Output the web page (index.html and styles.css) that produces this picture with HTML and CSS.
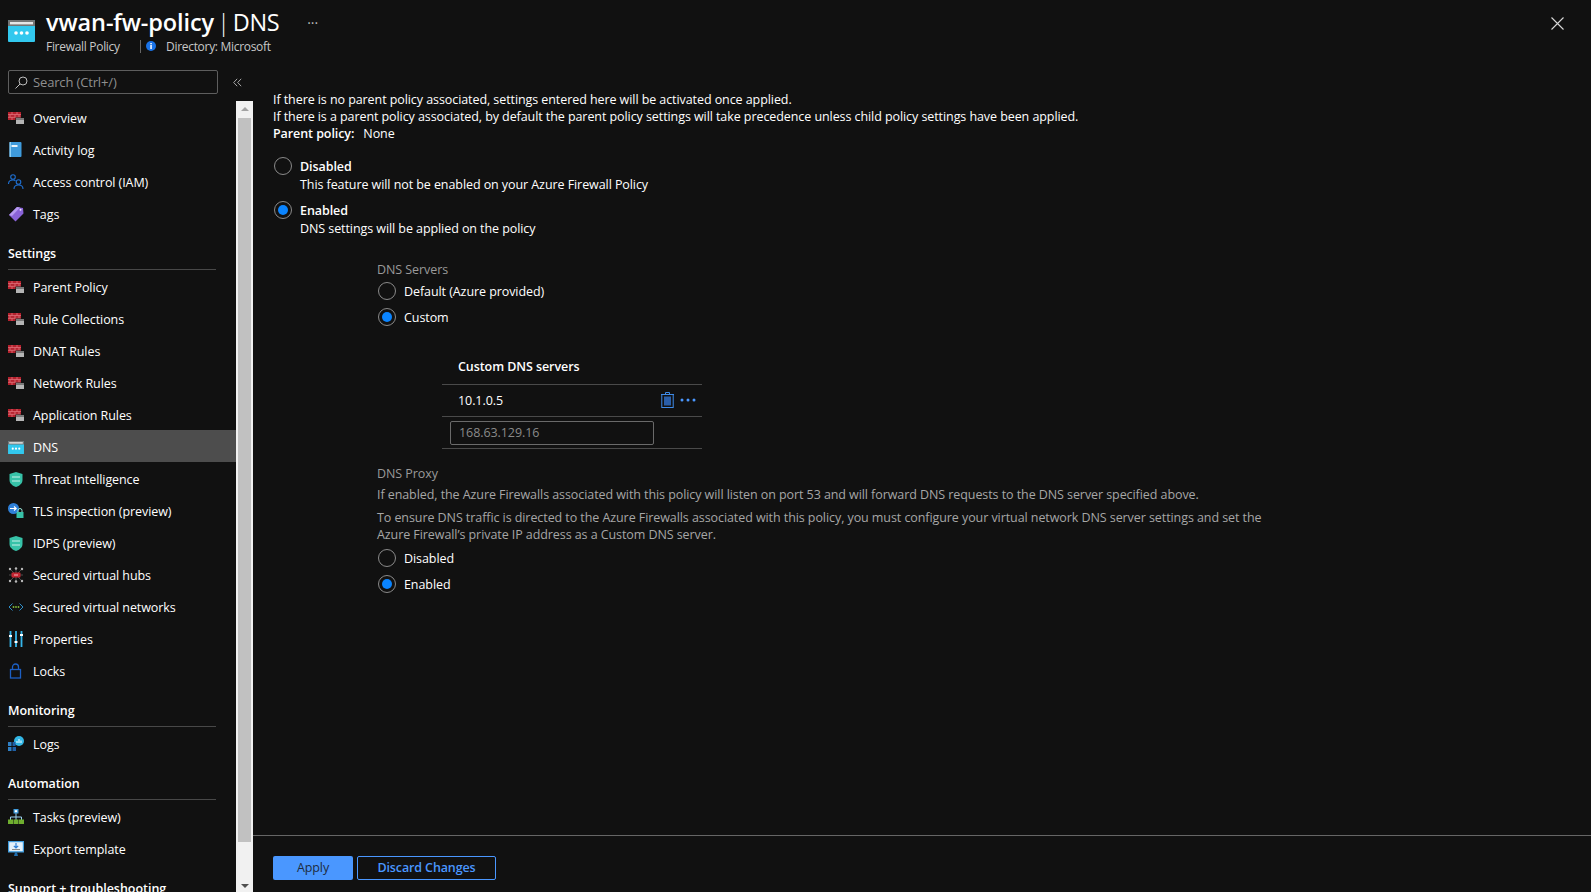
FILE: index.html
```html
<!DOCTYPE html>
<html lang="en">
<head>
<meta charset="utf-8">
<title>vwan-fw-policy | DNS</title>
<link rel="stylesheet" href="styles.css">
</head>
<body>
<svg class="defs" width="0" height="0" aria-hidden="true">
  <defs>
    <symbol id="i-fw" viewBox="0 0 16 12">
      <rect x="0" y="0" width="13" height="8" fill="#b3202c"/>
      <path d="M0 2.6h13M0 5.3h13M4 0v2.6M9 0v2.6M2 2.6v2.7M7 2.6v2.7M11 2.6v2.7M4 5.3V8M9 5.3V8" stroke="#e8818a" stroke-width=".7" fill="none"/>
      <rect x="7.5" y="5.5" width="8.5" height="6.5" fill="#111"/>
      <rect x="8" y="6" width="8" height="1.6" fill="#7a7a7a"/>
      <rect x="8" y="7.6" width="8" height="4.4" fill="#b5b5b5"/>
    </symbol>
    <symbol id="i-page" viewBox="0 0 27 22">
      <rect width="27" height="22" rx="1" fill="#32c8ee"/>
      <path d="M1 0h25a1 1 0 0 1 1 1v5H0V1a1 1 0 0 1 1-1z" fill="#757575"/>
      <rect x="2" y="2" width="23" height="2.4" fill="#e6e6e6"/>
      <circle cx="8" cy="13" r="1.8" fill="#fff"/><circle cx="13.5" cy="13" r="1.8" fill="#fff"/><circle cx="19" cy="13" r="1.8" fill="#fff"/>
    </symbol>
    <symbol id="i-shield" viewBox="0 0 14 15">
      <path d="M7 0l6.5 2v6c0 3.500-3 5.800-6.500 7C3.500 13.800.5 11.500.5 8V2z" fill="#37c2a8"/>
      <path d="M3 5h8M3 9h8" stroke="#c9f2ea" stroke-width="1" fill="none"/>
    </symbol>
  </defs>
</svg>
<div class="app">
  <header class="top">
    <svg class="page-icon"><use href="#i-page"/></svg>
    <div class="top-text">
      <div class="title-row">
        <h1 class="title"><b class="title-name">vwan-fw-policy</b> <span class="title-sep">|</span> DNS</h1>
        <span class="title-more">···</span>
      </div>
      <div class="subtitle">
        <span class="sub-type">Firewall Policy</span>
        <span class="sub-sep"></span>
        <svg class="sub-info" viewBox="0 0 10 10"><circle cx="5" cy="5" r="5" fill="#1a73e8"/><rect x="4.300" y="4" width="1.500" height="4" fill="#fff"/><rect x="4.300" y="2" width="1.500" height="1.300" fill="#fff"/></svg>
        <span class="sub-dir">Directory: Microsoft</span>
      </div>
    </div>
    <svg class="close" viewBox="0 0 13 13"><path d="M.5.5l12 12M12.500.5l-12 12" stroke="#d8d8d8" stroke-width="1.100" fill="none"/></svg>
  </header>

  <div class="layout">
    <aside class="side">
      <div class="search-row">
        <div class="search">
          <svg class="search-ic" viewBox="0 0 13 13"><circle cx="8" cy="5" r="4" stroke="#bdbdbd" fill="none"/><path d="M5 8l-4.500 4.500" stroke="#bdbdbd" fill="none"/></svg>
          <span>Search (Ctrl+/)</span>
        </div>
        <svg class="collapse" viewBox="0 0 9 9"><path d="M4.200.8L.7 4.500l3.500 3.700M8.200.8L4.700 4.500l3.500 3.700" stroke="#a8a8a8" fill="none"/></svg>
      </div>
      <div class="nav-wrap">
        <nav class="nav">
          <a class="item"><svg class="ic"><use href="#i-fw"/></svg>Overview</a>
          <a class="item"><svg class="ic" viewBox="0 0 16 16"><rect x="1.500" y="0" width="12" height="15" rx="1" fill="#3f9bdc"/><rect x="3.500" y="3" width="6" height="2" fill="#eaf5fc"/><rect x="1.500" y="0" width="1.500" height="15" fill="#8fd0f5"/></svg>Activity log</a>
          <a class="item"><svg class="ic" viewBox="0 0 16 16" fill="none" stroke="#1f6fd0" stroke-width="1.100"><circle cx="5" cy="3" r="2.300"/><path d="M.5 10c0-2.500 2-4 4.500-4 1 0 2 .3 2.500 1"/><circle cx="10.500" cy="8" r="2.300"/><path d="M6 15c0-2.500 2-4 4.500-4s4.500 1.500 4.500 4"/></svg>Access control (IAM)</a>
          <a class="item"><svg class="ic" viewBox="0 0 16 16"><path d="M1 9l8-8 6 1 .5 5.500-8 8z" fill="#8a63d8"/><path d="M1 9l8-8 3 .5-8 8.500z" fill="#b69af0"/><circle cx="12.500" cy="3.800" r="1" fill="#efe6ff"/></svg>Tags</a>

          <h2 class="group">Settings</h2>
          <a class="item"><svg class="ic"><use href="#i-fw"/></svg>Parent Policy</a>
          <a class="item"><svg class="ic"><use href="#i-fw"/></svg>Rule Collections</a>
          <a class="item"><svg class="ic"><use href="#i-fw"/></svg>DNAT Rules</a>
          <a class="item"><svg class="ic"><use href="#i-fw"/></svg>Network Rules</a>
          <a class="item"><svg class="ic"><use href="#i-fw"/></svg>Application Rules</a>
          <a class="item active"><svg class="ic ic-page"><use href="#i-page"/></svg>DNS</a>
          <a class="item"><svg class="ic ic-shield"><use href="#i-shield"/></svg>Threat Intelligence</a>
          <a class="item"><svg class="ic" viewBox="0 0 16 16"><circle cx="5.500" cy="5.500" r="5.500" fill="#2f80d8"/><path d="M2 5.500h6M6 3.500l2.200 2-2.200 2" stroke="#fff" stroke-width="1.100" fill="none"/><rect x="8.500" y="9" width="7" height="6" fill="#37c2a8"/><path d="M10 9V7.500a2 2 0 0 1 4 0V9" stroke="#9be8da" fill="none"/></svg>TLS inspection (preview)</a>
          <a class="item"><svg class="ic ic-shield"><use href="#i-shield"/></svg>IDPS (preview)</a>
          <a class="item"><svg class="ic" viewBox="0 0 16 16"><path d="M3 3l10 10M13 3L3 13M8 1v14M1 8h14" stroke="#777" stroke-width=".6"/><g fill="#b9b9b9"><circle cx="2" cy="2" r="1.200"/><circle cx="8" cy="1.500" r="1.200"/><circle cx="14" cy="2" r="1.200"/><circle cx="2" cy="14" r="1.200"/><circle cx="8" cy="14.500" r="1.200"/><circle cx="14" cy="14" r="1.200"/></g><rect x="3.500" y="5.500" width="9" height="5" rx="1" fill="#c42431"/><path d="M6 8h4" stroke="#f3b6bb"/></svg>Secured virtual hubs</a>
          <a class="item"><svg class="ic" viewBox="0 0 16 16"><path d="M4.500 4.500L1 8l3.500 3.500M11.500 4.500L15 8l-3.500 3.500" stroke="#2f8fc9" fill="none"/><circle cx="5.500" cy="8" r=".9" fill="#7fba3a"/><circle cx="8" cy="8" r=".9" fill="#7fba3a"/><circle cx="10.500" cy="8" r=".9" fill="#7fba3a"/></svg>Secured virtual networks</a>
          <a class="item"><svg class="ic" viewBox="0 0 16 16"><path d="M2.500 0v16M8 0v16M13.500 0v16" stroke="#36b6ea" stroke-width="1.800"/><rect x="1" y="4" width="3" height="2" fill="#fff"/><rect x="6.500" y="10" width="3" height="2" fill="#fff"/><rect x="12" y="3" width="3" height="2" fill="#fff"/></svg>Properties</a>
          <a class="item"><svg class="ic" viewBox="0 0 16 16" fill="none" stroke="#1c5fc4" stroke-width="1.300"><rect x="2.500" y="6.500" width="10" height="8.500"/><path d="M4.500 6.500V4a3 3 0 0 1 6 0v2.500"/></svg>Locks</a>

          <h2 class="group">Monitoring</h2>
          <a class="item"><svg class="ic" viewBox="0 0 16 16"><circle cx="11" cy="5" r="5" fill="#32b7e6"/><path d="M9 7V5M11 7V3M13 7V4.500" stroke="#fff"/><rect x="0" y="6" width="3.500" height="4" fill="#2f7fc4"/><rect x="4.500" y="6" width="3" height="4" fill="#1f5fa6"/><rect x="0" y="11" width="3.500" height="4" fill="#2f7fc4"/><rect x="4.500" y="11" width="3.500" height="4" fill="#1f5fa6"/></svg>Logs</a>

          <h2 class="group">Automation</h2>
          <a class="item"><svg class="ic" viewBox="0 0 16 16"><path d="M8 4v4M2.500 11V8h11v3M8 8v3" stroke="#9bd1f0" fill="none"/><rect x="5.500" y="0" width="5" height="4.500" fill="#3f9bdc"/><rect x="6.800" y="1.200" width="2.400" height="2" fill="#fff"/><rect x="0" y="10.500" width="5" height="4.500" fill="#6fae2f"/><rect x="5.500" y="10.500" width="5" height="4.500" fill="#6fae2f"/><rect x="11" y="10.500" width="5" height="4.500" fill="#6fae2f"/></svg>Tasks (preview)</a>
          <a class="item"><svg class="ic" viewBox="0 0 16 16"><rect x="0" y="0" width="16" height="11.500" fill="#3f9bdc"/><rect x="1.200" y="1.200" width="13.600" height="9" fill="#e4f1fa"/><path d="M8 2v4.500M5.800 4.800L8 7l2.200-2.200" stroke="#2f80d8" stroke-width="1.200" fill="none"/><rect x="4" y="8" width="8" height="1" fill="#8a8a8a"/><path d="M6 15l1-3.500h2l1 3.500z" fill="#1f6fb0"/></svg>Export template</a>

          <h2 class="group">Support + troubleshooting</h2>
        </nav>
        <div class="scroll">
          <span class="arrow arrow-up"></span>
          <span class="thumb"></span>
          <span class="arrow arrow-down"></span>
        </div>
      </div>
    </aside>

    <main class="main">
      <div class="content">
        <p class="line">If there is no parent policy associated, settings entered here will be activated once applied.</p>
        <p class="line">If there is a parent policy associated, by default the parent policy settings will take precedence unless child policy settings have been applied.</p>
        <p class="line"><b class="parent-label">Parent policy:</b>None</p>

        <div class="choice choice-first">
          <span class="radio"></span>
          <div class="choice-text"><div class="choice-title">Disabled</div><div class="line">This feature will not be enabled on your Azure Firewall Policy</div></div>
        </div>
        <div class="choice">
          <span class="radio on"></span>
          <div class="choice-text"><div class="choice-title">Enabled</div><div class="line">DNS settings will be applied on the policy</div></div>
        </div>

        <section class="dns">
          <div class="label">DNS Servers</div>
          <div class="opt"><span class="radio"></span>Default (Azure provided)</div>
          <div class="opt"><span class="radio on"></span>Custom</div>

          <div class="table">
            <div class="th">Custom DNS servers</div>
            <div class="tr">
              <span class="td-ip">10.1.0.5</span>
              <svg class="trash" viewBox="0 0 13 16" fill="none" stroke="#3f8be8"><path d="M0 2.500h13M4.500 2.500V.5h4v2"/><rect x=".8" y="2.500" width="11.400" height="13"/><rect x="3" y="4.500" width="7" height="9" fill="#2a5ea8" stroke="none"/></svg>
              <svg class="dots" viewBox="0 0 16 4"><circle cx="2" cy="2" r="1.500" fill="#4a97ff"/><circle cx="8" cy="2" r="1.500" fill="#4a97ff"/><circle cx="14" cy="2" r="1.500" fill="#4a97ff"/></svg>
            </div>
            <div class="tr tr-input"><div class="input">168.63.129.16</div></div>
          </div>

          <div class="label label-proxy">DNS Proxy</div>
          <p class="help">If enabled, the Azure Firewalls associated with this policy will listen on port 53 and will forward DNS requests to the DNS server specified above.</p>
          <p class="help help-two">To ensure DNS traffic is directed to the Azure Firewalls associated with this policy, you must configure your virtual network DNS server settings and set the<br>Azure Firewall’s private IP address as a Custom DNS server.</p>
          <div class="opt"><span class="radio"></span>Disabled</div>
          <div class="opt"><span class="radio on"></span>Enabled</div>
        </section>
      </div>
      <footer class="foot">
        <span class="btn btn-apply">Apply</span>
        <span class="btn btn-ghost">Discard Changes</span>
      </footer>
    </main>
  </div>
</div>
</body>
</html>
```
FILE: styles.css
```css
* { box-sizing: border-box; }
html, body { margin: 0; height: 100%; background: #111; overflow: hidden; }
body { font-family: "Open Sans", "Liberation Sans", sans-serif; font-size: 12.5px; letter-spacing: -0.075px; color: #fff; }
p, h1, h2 { margin: 0; }
.defs { position: absolute; }
.app { height: 892px; display: flex; flex-direction: column; overflow: hidden; }

.top { height: 70px; flex: none; display: flex; align-items: flex-start; padding: 7px 27px 0 8px; }
.page-icon { width: 27px; height: 22px; margin: 13px 11px 0 0; flex: none; }
.top-text { flex: 1; margin-top: -1px; }
.title-row { display: flex; align-items: flex-start; height: 32px; }
.title { font-size: 23.5px; font-weight: 400; line-height: 32px; letter-spacing: -0.4px; word-spacing: -2.5px; white-space: nowrap; }
.title-name { font-weight: 600; letter-spacing: -0.1px; }
.title-sep { font-weight: 300; }
.title-more { margin: 0 0 0 28px; color: #bbb; font-size: 14px; line-height: 34px; letter-spacing: 0; }
.subtitle { display: flex; align-items: center; height: 17px; font-size: 12px; letter-spacing: -0.3px; color: #c8c8c8; }
.sub-type { width: 94px; }
.sub-sep { width: 1px; height: 13px; background: #666; }
.sub-info { width: 10px; height: 10px; margin: -2px 10px 0 5px; }
.close { width: 13px; height: 13px; margin-top: 10px; flex: none; }

.layout { flex: 1; display: flex; min-height: 0; }
.side { width: 253px; flex: none; display: flex; flex-direction: column; }
.search-row { height: 31px; flex: none; display: flex; padding-left: 8px; }
.search { width: 210px; height: 24px; border: 1px solid #5e5e5e; border-radius: 2px; display: flex; align-items: center; gap: 5px; padding-left: 6px; color: #8f8f8f; font-size: 13px; letter-spacing: -0.15px; }
.search-ic { width: 13px; height: 13px; flex: none; }
.collapse { width: 9px; height: 9px; margin: 8px 0 0 15px; }
.nav-wrap { flex: 1; display: flex; min-height: 0; }
.nav { width: 236px; flex: none; overflow: hidden; padding-top: 1px; }
.item { height: 32px; display: flex; align-items: center; padding-left: 8px; color: #fff; white-space: nowrap; }
.item.active { background: #4d4d4d; margin: -1px 0 1px; padding-top: 2px; }
.ic { width: 16px; height: 16px; margin-right: 9px; flex: none; }
.ic-page { height: 13px; }
.ic-shield { height: 15px; }
.group { height: 40px; margin: 0 20px 1px 8px; padding-top: 15px; font-size: 12.5px; font-weight: 600; line-height: 18px; letter-spacing: -0.03px; border-bottom: 1px solid #484848; white-space: nowrap; }
.scroll { width: 17px; flex: none; background: #f1f1f1; display: flex; flex-direction: column; align-items: center; }
.thumb { width: 13px; height: 724px; background: #c1c1c1; flex: none; }
.arrow { width: 0; height: 0; flex: none; border-left: 4px solid transparent; border-right: 4px solid transparent; }
.arrow-up { border-bottom: 4px solid #a3a3a3; margin: 6px 0 7px; }
.arrow-down { border-top: 4px solid #505050; margin-top: 42px; }

.main { flex: 1; display: flex; flex-direction: column; min-width: 0; }
.content { flex: 1; padding: 21px 0 0 20px; }
.line { line-height: 17px; white-space: nowrap; }
.parent-label { font-weight: 600; margin-right: 9px; }
.choice { display: flex; gap: 8px; padding-left: 1px; margin-top: 8px; height: 36px; }
.choice-first { margin-top: 15px; }
.choice-text { padding-top: 1px; }
.choice-title { font-weight: 600; line-height: 18px; }
.radio { width: 18px; height: 18px; border: 1px solid #8a8a8a; border-radius: 50%; flex: none; display: flex; align-items: center; justify-content: center; }
.radio.on::after { content: ""; width: 10px; height: 10px; border-radius: 50%; background: #0a84ff; }
.dns { padding-left: 104px; margin-top: 24px; }
.label { color: #9a9a9a; line-height: 17px; }
.opt { height: 26px; display: flex; align-items: center; gap: 8px; padding-left: 1px; }
.table { width: 260px; margin: 21px 0 0 65px; }
.th { height: 34px; padding-left: 16px; font-weight: 600; line-height: 32px; border-bottom: 1px solid #4a4a4a; }
.tr { height: 32px; display: flex; align-items: center; padding: 0 6px 0 16px; border-bottom: 1px solid #4a4a4a; }
.td-ip { flex: 1; }
.trash { width: 13px; height: 16px; margin: -2px 6px 0 0; }
.dots { width: 16px; height: 4px; margin-top: -2px; }
.tr-input { padding-left: 8px; }
.input { width: 204px; height: 24px; border: 1px solid #6a6a6a; border-radius: 2px; padding-left: 8px; line-height: 22px; color: #8a8a8a; }
.label-proxy { margin-top: 16px; }
.help { color: #a6a6a6; line-height: 17px; margin-top: 4px; white-space: nowrap; }
.help-two { margin-top: 6px; margin-bottom: 2px; }

.foot { height: 57px; flex: none; border-top: 1px solid #666; padding: 20px 0 0 20px; display: flex; gap: 4px; }
.btn { height: 24px; border-radius: 2px; display: flex; align-items: center; justify-content: center; padding-bottom: 1px; }
.btn-apply { width: 80px; background: #4a97ff; color: #1e2c40; }
.btn-ghost { width: 139px; border: 1px solid #4a97ff; color: #4a97ff; font-weight: 600; letter-spacing: -0.12px; }
```
